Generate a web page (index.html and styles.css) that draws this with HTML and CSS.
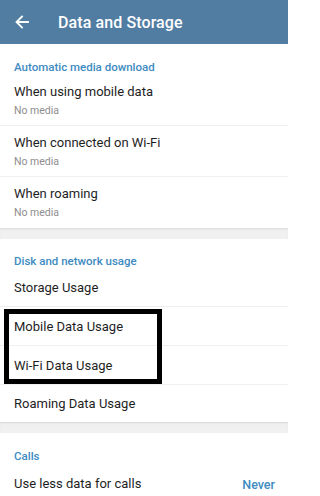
FILE: index.html
```html
<!DOCTYPE html>
<html>
<head>
<meta charset="utf-8">
<link rel="stylesheet" href="styles.css">
</head>
<body>
<div class="app">
  <header class="topbar">
    <svg class="back" width="14" height="14" viewBox="0 0 14 14"><path d="M13 7H2M7 1.5L1.5 7L7 12.5" fill="none" stroke="#fff" stroke-width="1.8" stroke-linecap="square"/></svg>
    <span class="title">Data and Storage</span>
  </header>

  <section class="section">
    <div class="sec-head">Automatic media download</div>
    <div class="item two sep"><div class="t">When using mobile data</div><div class="s">No media</div></div>
    <div class="item two sep"><div class="t">When connected on Wi-Fi</div><div class="s">No media</div></div>
    <div class="item two"><div class="t">When roaming</div><div class="s">No media</div></div>
  </section>
  <div class="gap"></div>

  <section class="section">
    <div class="sec-head short">Disk and network usage</div>
    <div class="item one sep h38"><div class="t">Storage Usage</div></div>
    <div class="item one sep"><div class="t">Mobile Data Usage</div></div>
    <div class="item one sep"><div class="t">Wi-Fi Data Usage</div></div>
    <div class="item one h37"><div class="t">Roaming Data Usage</div></div>
    <div class="highlight"></div>
  </section>
  <div class="gap"></div>

  <section class="section">
    <div class="sec-head">Calls</div>
    <div class="item one row"><div class="t">Use less data for calls</div><div class="val">Never</div></div>
  </section>
</div>
</body>
</html>
```
FILE: styles.css
```css
html, body { margin: 0; padding: 0; }
body { background: #fff; font-family: Roboto, "Noto Sans", sans-serif; overflow: hidden; }
.app { width: 288px; height: 496px; overflow: hidden; }
.topbar {
  height: 44px; background: #527da3; display: flex; align-items: center;
  padding-left: 15px; box-sizing: border-box; color: #fff;
}
.back { flex: none; }
.title { margin-left: 29px; font-size: 16px; font-weight: 500; letter-spacing: 0.1px; }
.section { position: relative; background: #fff; }
.sec-head {
  height: 31px; box-sizing: border-box; padding: 16px 14px 0;
  font-size: 11.5px; font-weight: 500; color: #3d8bc1; line-height: 14px;
}
.sec-head.short { height: 30px; padding-top: 15px; }
.item { padding: 0 14px; box-sizing: border-box; }
.item.sep { border-bottom: 1px solid #efefef; }
.item.two { height: 51px; padding-top: 9px; }
.item.one { height: 39px; display: flex; align-items: center; padding-top: 1px; }
.item.one.h38 { height: 38px; }
.item.one.h37 { height: 37px; }
.t { font-size: 13px; color: #1e1e1e; line-height: 16px; }
.s { font-size: 10.5px; color: #8e8e8e; margin-top: 4px; line-height: 14px; }
.row { justify-content: space-between; padding-right: 13px; }
.val { font-size: 12.5px; font-weight: 500; color: #3d8bc1; }
.gap {
  height: 11px; background: #f0f0f0;
  box-shadow: inset 0 2px 2px -1px #d8d8d8;
}
.highlight {
  position: absolute; left: 4px; top: 70px; width: 158px; height: 75px;
  border: 5px solid #000; box-sizing: border-box;
}
```
